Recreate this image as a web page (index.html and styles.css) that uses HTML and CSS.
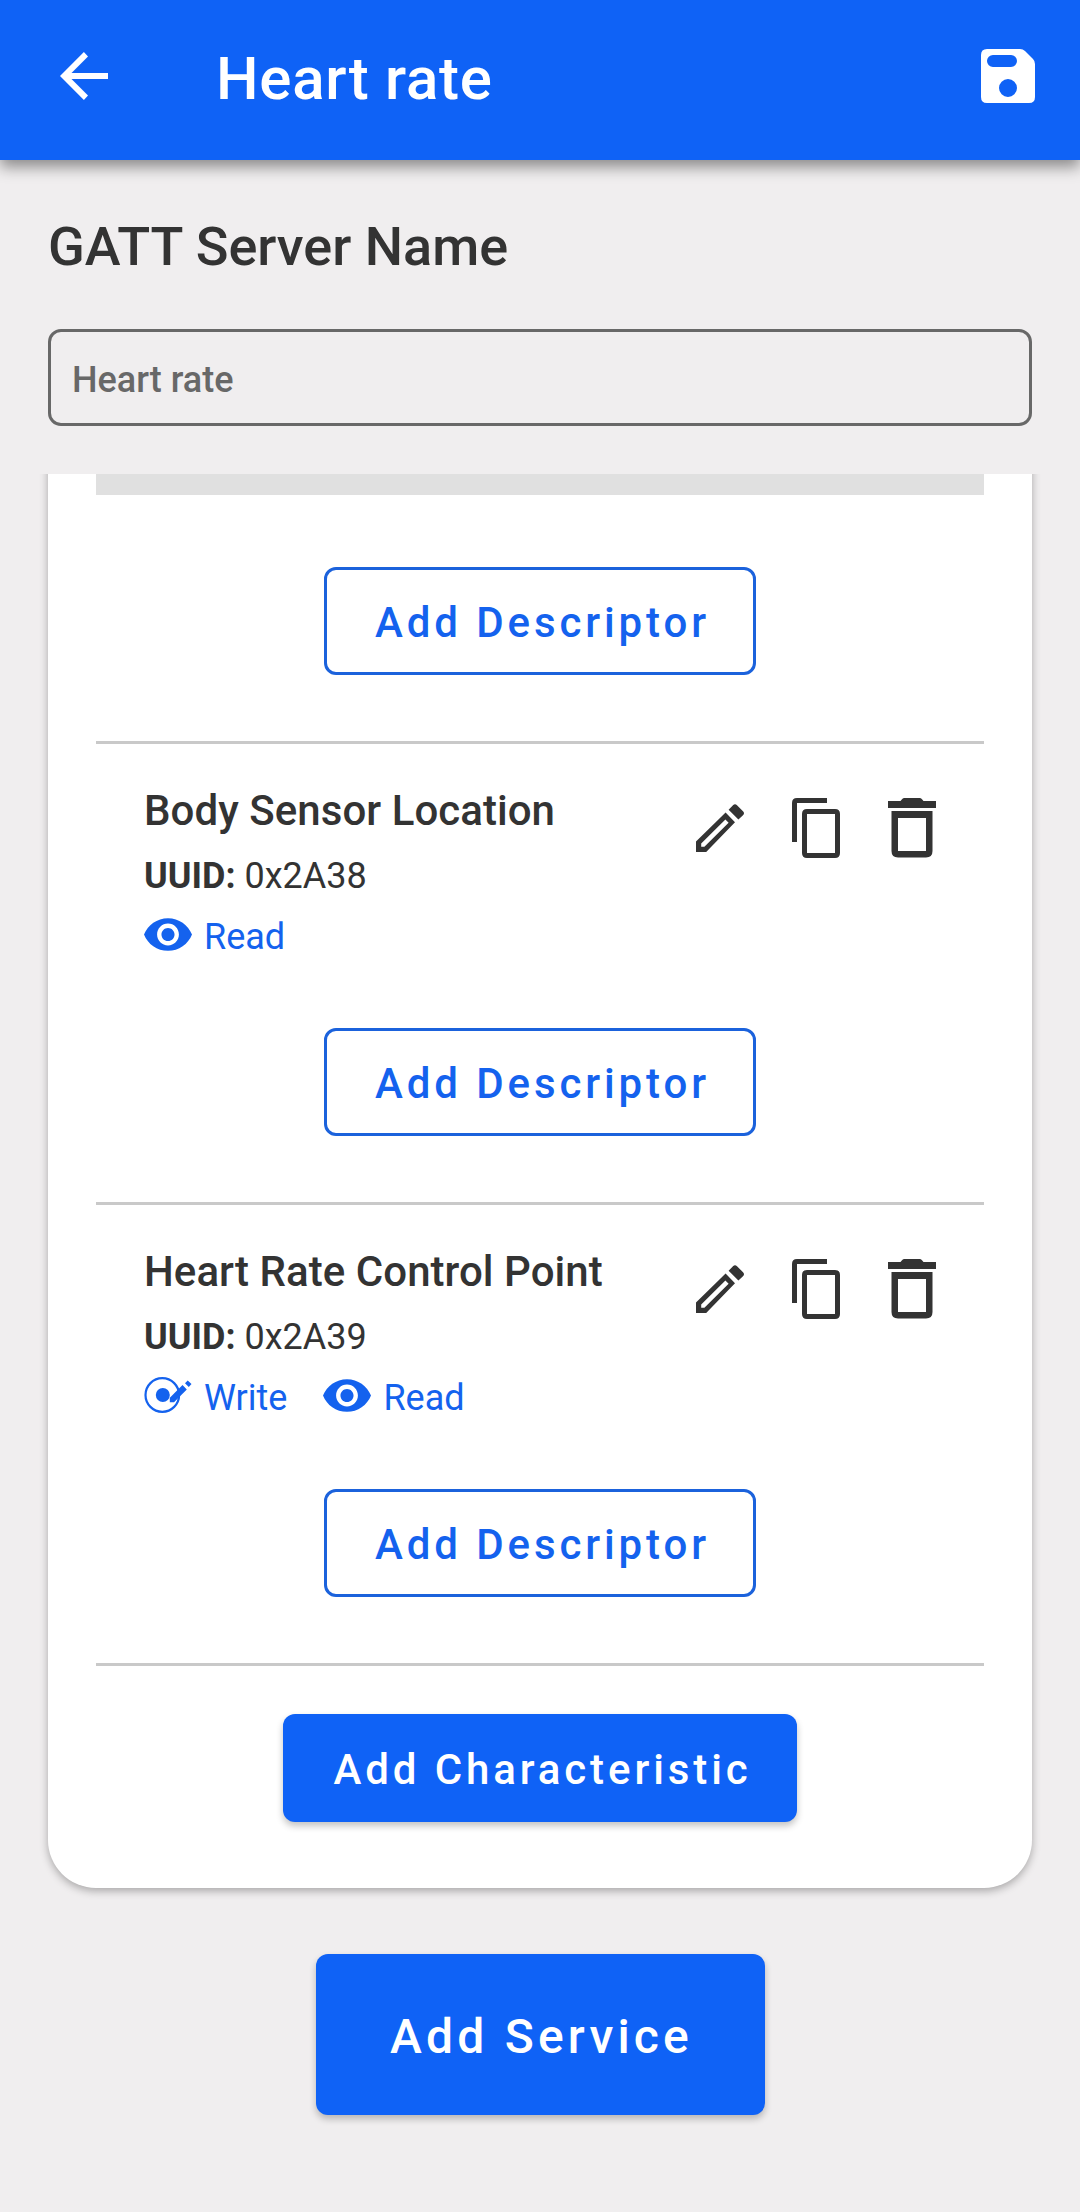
FILE: index.html
```html
<!DOCTYPE html>
<html lang="en">
<head>
<meta charset="utf-8">
<title>Heart rate</title>
<link rel="stylesheet" href="styles.css">
</head>
<body>
<svg class="sprite" aria-hidden="true">
  <symbol id="edit" viewBox="0 0 48 48"><path fill-rule="evenodd" d="M0 48V37.600L29.600 8.400L39 18.200L10.200 48ZM5.200 42.800H8.400L32.600 18.800L29.400 15.600L5.200 39.600ZM32.600 5.800L37 1.200Q39 -.8 41 1.200L47 7.200Q49 9.200 47 11.200L42.400 15.600Z"/></symbol>
  <symbol id="copy" viewBox="0 0 48 60"><path fill-rule="evenodd" d="M5 44H0V5Q0 0 5 0H35V5H5ZM15 11H43Q48 11 48 16V55Q48 60 43 60H15Q10 60 10 55V16Q10 11 15 11ZM15 16V55H43V16Z"/></symbol>
  <symbol id="trash" viewBox="0 0 48 60"><path fill-rule="evenodd" d="M0 3H12.500L14 1.200Q15 0 16.500 0H31.500Q33 0 34 1.200L35.500 3H48V10H0ZM3.500 13H44.500V53Q44.500 59.500 38 59.500H10Q3.500 59.500 3.500 53ZM10 20V53H38V20Z"/></symbol>
  <symbol id="eye" viewBox="1 4.500 22 15"><path d="M12 4.500C7 4.500 2.730 7.610 1 12c1.730 4.390 6 7.500 11 7.500s9.270-3.110 11-7.500c-1.730-4.390-6-7.500-11-7.500zM12 17c-2.760 0-5-2.240-5-5s2.240-5 5-5 5 2.240 5 5-2.240 5-5 5zm0-8c-1.660 0-3 1.340-3 3s1.340 3 3 3 3-1.340 3-3-1.340-3-3-3z"/></symbol>
  <symbol id="write" viewBox="0 0 48 36"><circle cx="18.300" cy="18" r="16.800" fill="none" stroke="currentColor" stroke-width="2.200"/><circle cx="18.800" cy="18" r="7"/><path d="M25.800 25.200V20.700L38.500 8L42.800 12.500L30 25.200ZM41 6.300L43.700 3.500L47.500 7L44.800 9.900Z"/></symbol>
</svg>

<header class="app-bar">
  <svg class="back" viewBox="0 0 48 48"><path d="M48 21H11.500L28 4.500L23.900 0L0 24L23.900 48L28 43.500L11.500 27H48Z"/></svg>
  <h1 class="app-title">Heart rate</h1>
  <svg class="save" viewBox="0 0 54 54"><path fill-rule="evenodd" d="M6 0H39Q42 0 44 2L52 10Q54 12 54 15V48Q54 54 48 54H6Q0 54 0 48V6Q0 0 6 0ZM12 6A6 6 0 0 0 12 18H30A6 6 0 0 0 30 6ZM27 30A9 9 0 1 0 27 48A9 9 0 1 0 27 30Z"/></svg>
</header>

<section class="server">
  <h2 class="server-label">GATT Server Name</h2>
  <div class="server-input">Heart rate</div>
</section>

<main class="scroller">
  <article class="card">
    <div class="bar"></div>
    <div class="descriptor first"><button class="btn outlined">Add Descriptor</button></div>

    <section class="characteristic">
      <div class="info">
        <div class="details">
          <h3 class="name">Body Sensor Location</h3>
          <p class="uuid"><b>UUID:</b> 0x2A38</p>
          <div class="props">
            <span class="prop"><svg class="eye"><use href="#eye"/></svg>Read</span>
          </div>
        </div>
        <div class="actions">
          <svg class="edit"><use href="#edit"/></svg>
          <svg class="tall"><use href="#copy"/></svg>
          <svg class="tall"><use href="#trash"/></svg>
        </div>
      </div>
      <div class="descriptor"><button class="btn outlined">Add Descriptor</button></div>
    </section>

    <section class="characteristic">
      <div class="info">
        <div class="details">
          <h3 class="name">Heart Rate Control Point</h3>
          <p class="uuid"><b>UUID:</b> 0x2A39</p>
          <div class="props">
            <span class="prop"><svg class="write"><use href="#write"/></svg>Write</span>
            <span class="prop"><svg class="eye"><use href="#eye"/></svg>Read</span>
          </div>
        </div>
        <div class="actions">
          <svg class="edit"><use href="#edit"/></svg>
          <svg class="tall"><use href="#copy"/></svg>
          <svg class="tall"><use href="#trash"/></svg>
        </div>
      </div>
      <div class="descriptor"><button class="btn outlined">Add Descriptor</button></div>
    </section>

    <div class="card-footer"><button class="btn filled">Add Characteristic</button></div>
  </article>
  <button class="btn filled service">Add Service</button>
</main>
</body>
</html>
```
FILE: styles.css
```css
* { box-sizing: border-box; margin: 0; padding: 0; }

body {
  display: flex;
  flex-direction: column;
  height: 2212px;
  background: #f0eeef;
  color: #333;
  font-family: Roboto, sans-serif;
  overflow: hidden;
}

svg { display: block; flex: none; fill: currentColor; }
.sprite { display: none; }

.app-bar {
  display: flex;
  align-items: center;
  flex: none;
  height: 160px;
  padding: 0 45px 8px 60px;
  background: #0f62f6;
  color: #fff;
  box-shadow: 0 7px 14px rgba(0, 0, 0, .42);
}
.back { width: 48px; height: 48px; }
.app-title {
  flex: 1;
  padding-top: 5px;
  margin-left: 108px;
  font-size: 60px;
  font-weight: 500;
  line-height: 72px;
  letter-spacing: .75px;
}
.save { width: 54px; height: 54px; }

.server { flex: none; height: 314px; padding: 51px 48px 0; }
.server-label {
  height: 118px;
  font-size: 54px;
  font-weight: 500;
  line-height: 72px;
}
.server-input {
  height: 97px;
  padding: 0 21px;
  border: 3px solid #686868;
  border-radius: 13px;
  color: #686868;
  font-size: 36px;
  font-weight: 500;
  line-height: 97px;
}

.scroller {
  display: flex;
  flex-direction: column;
  align-items: center;
  flex: 1;
  overflow: hidden;
}
/* The card is scrolled: its upper part runs out above the scroller. */
.card {
  width: 984px;
  height: 1434px;
  flex: none;
  margin-top: -20px;
  padding: 0 48px;
  border-radius: 0 0 48px 48px;
  background: #fff;
  box-shadow: 0 3px 9px rgba(0, 0, 0, .3);
}
.bar { height: 41px; background: #e0e0e0; }

.descriptor {
  display: flex;
  justify-content: center;
  height: 177px;
  border-bottom: 3px solid #c9c9c9;
}
.descriptor.first { height: 249px; padding-top: 72px; }

.btn {
  height: 108px;
  padding: 2px 0 0 5px;
  border: 0;
  border-radius: 12px;
  font-family: inherit;
  font-size: 42px;
  font-weight: 500;
  letter-spacing: 3.9px;
  white-space: nowrap;
}
.outlined { width: 432px; border: 3px solid #1b62dc; background: #fff; color: #1462ee; }
.filled {
  width: 514px;
  background: #0f62f6;
  color: #fff;
  box-shadow: 0 4px 7px rgba(0, 0, 0, .24);
}

.info {
  display: flex;
  justify-content: space-between;
  height: 284px;
  padding: 0 48px;
}
.name {
  padding-top: 39px;
  font-size: 42px;
  font-weight: 500;
  line-height: 56px;
  letter-spacing: .05px;
}
.uuid { padding-top: 13px; font-size: 36px; line-height: 48px; }
.props { display: flex; gap: 36px; padding-top: 13px; }
.prop {
  display: flex;
  align-items: center;
  gap: 12px;
  height: 48px;
  color: #1462ee;
  font-size: 36px;
}
.eye { width: 48px; height: 33px; margin-bottom: 6px; }
.write { width: 48px; height: 36px; margin-bottom: 6px; }
.actions { display: flex; align-items: center; gap: 48px; height: 168px; }
.edit { width: 48px; height: 48px; }
.tall { width: 48px; height: 60px; }

.card-footer { display: flex; justify-content: center; padding-top: 48px; }
.service {
  width: 449px;
  height: 161px;
  flex: none;
  margin-top: 66px;
  padding: 3px 0 0 3px;
  font-size: 48px;
  letter-spacing: 4.200px;
}
```
